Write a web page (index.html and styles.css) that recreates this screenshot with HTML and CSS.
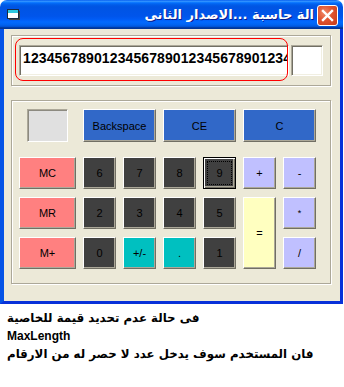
FILE: index.html
```html
<!DOCTYPE html>
<html lang="ar">
<head>
<meta charset="utf-8">
<title>الة حاسبة</title>
<link rel="stylesheet" href="styles.css">
</head>
<body>
<div class="window">
  <div class="titlebar">
    <svg class="app-icon" width="14" height="12" viewBox="0 0 14 12">
      <rect x="2" y="2" width="11" height="9" fill="#444"/>
      <rect x="0.5" y="0.5" width="11" height="9" fill="#fff" stroke="#1a2a40"/>
      <rect x="1" y="1" width="10" height="3" fill="#2ec8e0"/>
    </svg>
    <span class="title" dir="rtl">الة حاسبة ...الاصدار الثانى</span>
    <span class="close">
      <svg width="13" height="13" viewBox="0 0 13 13"><path d="M2 2 L11 11 M11 2 L2 11" stroke="#fff" stroke-width="2.4" stroke-linecap="square"/></svg>
    </span>
  </div>
  <div class="client">
    <div class="group display-group">
      <div class="display">1234567890123456789012345678901234567890</div>
      <div class="mem-display"></div>
      <div class="highlight"></div>
    </div>
    <div class="group keypad-group">
      <div class="toprow">
        <div class="mem-indicator"></div>
        <button class="btn blue span2">Backspace</button>
        <button class="btn blue span2">CE</button>
        <button class="btn blue span2">C</button>
      </div>
      <div class="keys">
        <button class="btn pink">MC</button>
        <button class="btn dark">6</button>
        <button class="btn dark">7</button>
        <button class="btn dark">8</button>
        <button class="btn dark focus">9</button>
        <button class="btn op">+</button>
        <button class="btn op">-</button>

        <button class="btn pink">MR</button>
        <button class="btn dark">2</button>
        <button class="btn dark">3</button>
        <button class="btn dark">4</button>
        <button class="btn dark">5</button>
        <button class="btn equals">=</button>
        <button class="btn op small">*</button>

        <button class="btn pink">M+</button>
        <button class="btn dark">0</button>
        <button class="btn cyan">+/-</button>
        <button class="btn cyan">.</button>
        <button class="btn dark">1</button>
        <button class="btn op">/</button>
      </div>
    </div>
  </div>
</div>
<div class="note">
  <p dir="rtl">فى حالة عدم تحديد قيمة للخاصية</p>
  <p class="latin">MaxLength</p>
  <p dir="rtl">فان المستخدم سوف يدخل عدد لا حصر له من الارقام</p>
</div>
</body>
</html>
```

FILE: styles.css
```css
html, body {
  margin: 0;
  padding: 0;
  background: #fff;
}

.window {
  width: 343px;
}

.titlebar {
  height: 29px;
  display: flex;
  align-items: center;
  border-radius: 7px 7px 0 0;
  background: linear-gradient(#0058ee 0%, #3593ff 4%, #288eff 6%, #127dff 8%, #036ffc 10%, #0262ee 14%, #0057e5 20%, #0054e3 24%, #0055eb 56%, #005bf5 66%, #026afe 76%, #0062ef 86%, #0052d6 92%, #0040ab 94%, #003092 100%);
}

.app-icon {
  margin-left: 7px;
  margin-top: 1px;
  flex: none;
}

.title {
  flex: 1;
  text-align: right;
  color: #fff;
  font: bold 13px "DejaVu Sans", sans-serif;
  text-shadow: 1px 1px 0 #0a1e8c;
  margin-right: 3px;
  white-space: nowrap;
  overflow: hidden;
}

.close {
  flex: none;
  width: 19px;
  height: 19px;
  margin-right: 5px;
  margin-top: 1px;
  border: 1px solid #fff;
  border-radius: 3px;
  background: radial-gradient(circle at 35% 35%, #f08a6a 0%, #e0532f 45%, #c53a17 100%);
  display: flex;
  align-items: center;
  justify-content: center;
}

.client {
  background: #ece9d8;
  height: 272px;
  border-left: 4px solid #0553e6;
  border-right: 3px solid #0831d9;
  border-bottom: 3px solid #0831d9;
  box-sizing: content-box;
  display: flex;
  flex-direction: column;
  align-items: flex-start;
}

.group {
  position: relative;
  box-sizing: border-box;
  width: 320px;
  margin-left: 7px;
  border: 1px solid #aca899;
  box-shadow: 1px 1px 0 #fff, inset 1px 1px 0 #fff;
}

.display-group {
  margin-top: 6px;
  height: 51px;
  padding: 9px 7px;
  display: flex;
  gap: 2px;
}

.display, .mem-display {
  box-sizing: border-box;
  height: 31px;
  background: #fff;
  border: 1px solid;
  border-color: #aca899 #fff #fff #aca899;
  box-shadow: inset 1px 1px 0 #716f64, inset -1px -1px 0 #f1efe2;
}

.display {
  width: 270px;
  overflow: hidden;
  white-space: nowrap;
  font: bold 14px "Liberation Sans", Arial, sans-serif;
  letter-spacing: 0.1px;
  line-height: 16px;
  padding: 4px 0 0 3px;
  color: #000;
}

.mem-display {
  width: 32px;
}

.highlight {
  position: absolute;
  left: 3px;
  top: 2px;
  width: 273px;
  height: 43px;
  box-sizing: border-box;
  border: 1px solid #f00;
  border-radius: 8px;
  pointer-events: none;
}

.keypad-group {
  margin-top: 14px;
  padding: 8px 7px 14px;
}

.toprow, .keys {
  display: grid;
  grid-template-columns: 57px repeat(6, 33px);
  column-gap: 7px;
}

.toprow {
  grid-template-rows: 33px;
  margin-bottom: 15px;
}

.keys {
  grid-template-rows: repeat(3, 32px);
  row-gap: 8px;
}

.span2 {
  grid-column: span 2;
}

.mem-indicator {
  margin-left: 8px;
  width: 41px;
  box-sizing: border-box;
  background: #e0e0e0;
  border: 1px solid;
  border-color: #aca899 #fff #fff #aca899;
  box-shadow: inset 1px 1px 0 #8c8a80;
}

.btn {
  position: relative;
  box-sizing: border-box;
  margin: 0;
  padding: 0;
  font: 11px "Liberation Sans", Arial, sans-serif;
  color: #000;
  border: 1px solid;
  border-color: #fff #716f64 #716f64 #fff;
  box-shadow: inset -1px -1px 0 #aca899;
  display: flex;
  align-items: center;
  justify-content: center;
}

.blue { background: #3168c8; }
.pink { background: #ff8080; }
.dark { background: #404040; }
.cyan { background: #00c0c0; }
.op { background: #c0c0ff; }
.equals {
  background: #ffffc0;
  grid-row: span 2;
}

.small {
  font-size: 9px;
}

.focus {
  border-color: #000;
  box-shadow: inset 1px 1px 0 #fff, inset -1px -1px 0 #716f64, inset -2px -2px 0 #aca899;
}

.focus::after {
  content: "";
  position: absolute;
  left: 3px;
  top: 3px;
  right: 3px;
  bottom: 3px;
  border: 1px dotted #000;
}

.note {
  padding: 5px 0 0 7px;
}

.note p {
  margin: 0;
  font: bold 11.8px "DejaVu Sans", sans-serif;
  line-height: 18px;
  color: #000;
  text-align: left;
}

.note p.latin {
  font-family: "Liberation Sans", Arial, sans-serif;
  font-size: 12px;
}
```
